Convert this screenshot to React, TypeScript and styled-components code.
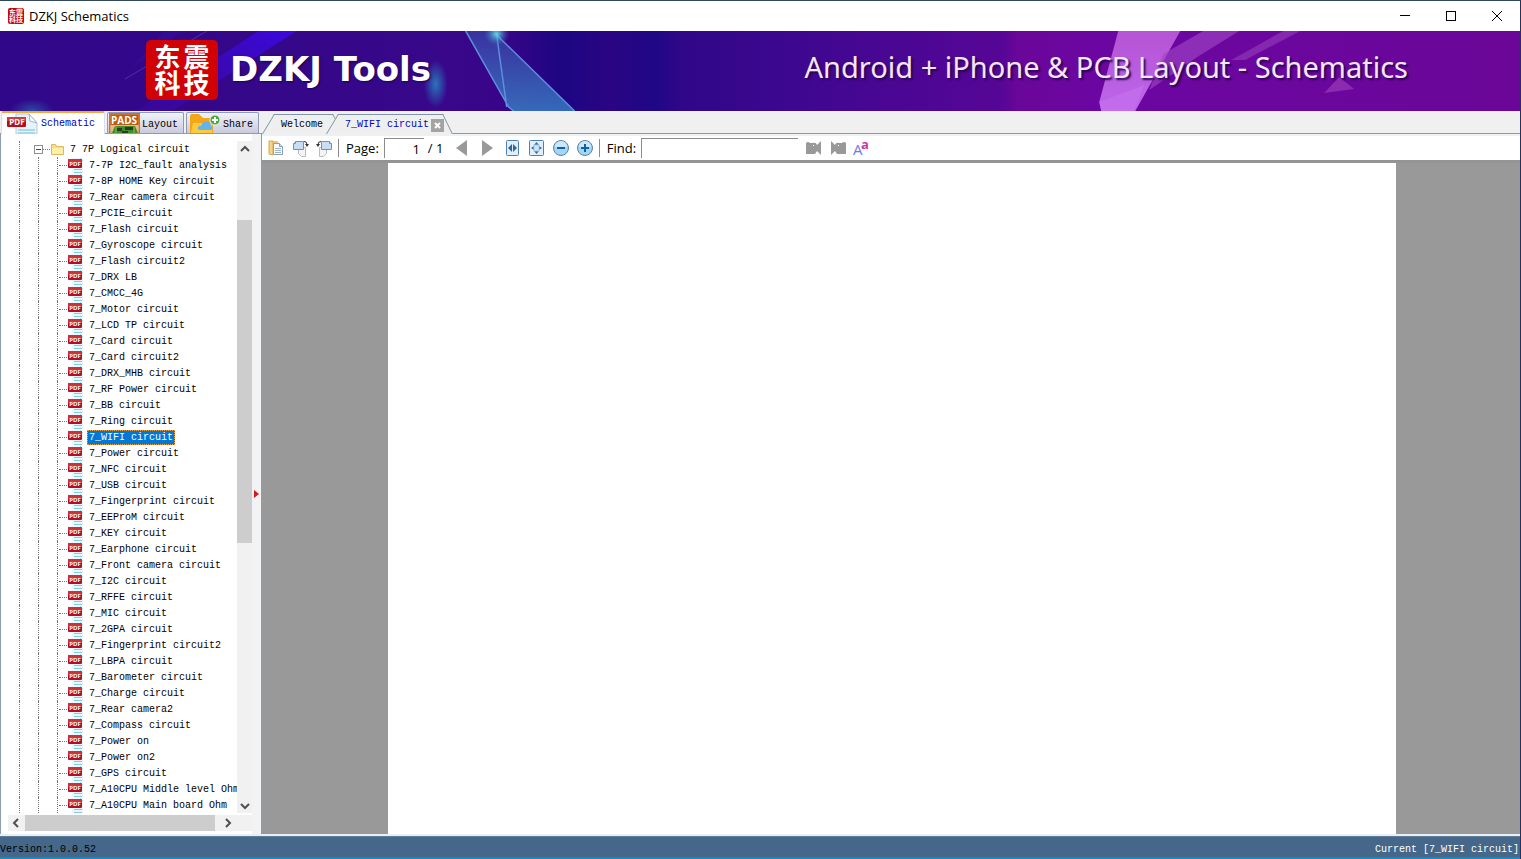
import React from "react";
import styled, { createGlobalStyle, css } from "styled-components";

const mono = `"Liberation Mono", monospace`;
const ui = `"Open Sans", "Noto Sans", sans-serif`;
const cjk = `"Noto Sans CJK SC", sans-serif`;

const Global = createGlobalStyle`
  *, *::before, *::after { box-sizing: border-box; }
  body { margin: 0; background: #f0f0f0; }
  button { padding: 0; border: 0; background: none; color: inherit; font: inherit; }
  svg { display: block; flex: none; }
`;

const Window = styled.div`
  display: flex;
  flex-direction: column;
  min-height: 100vh;
  border-top: 1px solid #31475c;
  border-right: 1px solid #26305e;
  background: #f0f0f0;
  color: #000;
  font: 10px/16px ${mono};
`;

const TitleBar = styled.header`
  display: flex;
  align-items: center;
  height: 30px;
  padding: 0 0 0 8px;
  background: #fff;
`;

const Title = styled.h1`
  flex: 1;
  margin: 0 0 0 5px;
  font: 13px/16px ${ui};
`;

const CaptionButton = styled.button`
  display: flex;
  align-items: center;
  justify-content: center;
  width: 46px;
  height: 30px;
`;

const Banner = styled.div`
  position: relative;
  display: flex;
  align-items: center;
  height: 80px;
  padding: 0 112px 0 146px;
  overflow: hidden;
  background: #32078a;
  color: #fff;
`;

const BannerArt = styled.svg`
  position: absolute;
  inset: 0;
  width: 100%;
  height: 100%;
`;

const Logo = styled.div<{ $small?: boolean }>`
  position: relative;
  display: grid;
  grid-template-columns: auto auto;
  place-content: center;
  background: #d00205;
  color: #fff;
  font-family: ${cjk};
  font-weight: 700;
  ${(p) =>
    p.$small
      ? css`
          width: 16px;
          height: 16px;
          border-radius: 2px;
          font-size: 7px;
          line-height: 7px;
        `
      : css`
          column-gap: 3px;
          width: 72px;
          height: 60px;
          margin-bottom: 2px;
          padding-bottom: 2px;
          border-radius: 5px;
          font-size: 26px;
          line-height: 26px;
        `}
`;

const Brand = styled.strong`
  position: relative;
  flex: 1;
  margin: 0 0 4px 12px;
  font: 700 34px/40px "DejaVu Sans", sans-serif;
  text-shadow: 1px 1px 2px #1a0550;
`;

const Slogan = styled.span`
  position: relative;
  margin-bottom: 8px;
  font: 29px/40px "Noto Sans", sans-serif;
  color: #f4e6fb;
  text-shadow: 2px 2px 2px #2b0550;
  white-space: nowrap;
`;

const Tabs = styled.div`
  display: flex;
  align-items: flex-end;
  height: 23px;
`;

const SideTabs = styled.nav`
  display: flex;
  align-items: flex-end;
  gap: 2px;
  width: 262px;
  height: 23px;
  padding-left: 1px;
  border-bottom: 1px solid #8b9cb3;
`;

const SideTab = styled.button<{ $active?: boolean }>`
  display: flex;
  align-items: center;
  gap: 2px;
  height: 21px;
  padding: 0 5px 0 1px;
  overflow: hidden;
  border: 1px solid #8b9cb3;
  border-bottom: 0;
  border-radius: 2px 2px 0 0;
  background: linear-gradient(#f1f2f7, #c9cbde);
  > span {
    padding-top: 3px;
  }
  ${(p) =>
    p.$active &&
    css`
      gap: 2px;
      height: 23px;
      margin-bottom: -1px;
      padding: 0 9px 0 4px;
      border-color: #d9dfe8;
      border-top: 2px solid #f2a83c;
      background: #fff;
      color: #0000c8;
      > span {
        padding-top: 0;
      }
    `}
`;

const DocTabs = styled.div`
  display: flex;
  flex: 1;
  align-items: flex-end;
  height: 23px;
  padding-left: 6px;
  border-bottom: 1px solid #8d9ba8;
`;

const DocTab = styled.div<{ $active?: boolean }>`
  position: relative;
  display: flex;
  align-items: center;
  gap: 2px;
  height: 20px;
  margin-bottom: -1px;
  padding: 2px 16px 0 13px;
  ${(p) =>
    p.$active &&
    css`
      margin-left: -7px;
      padding-right: 4px;
      color: #0000c8;
    `}

  &::before,
  &::after {
    content: "";
    position: absolute;
    top: 0;
    bottom: 0;
    border-top: 1px solid #7f95a8;
    background: #efefef;
  }
  &::before {
    left: 0;
    right: 40%;
    border-left: 1px solid #7f95a8;
    transform: skewX(-31deg);
  }
  &::after {
    left: 40%;
    right: 0;
    border-right: 1px solid #7f95a8;
    transform: skewX(${(p) => (p.$active ? 26 : 31)}deg);
  }
  > * {
    position: relative;
    z-index: 1;
  }
`;

const CloseTab = styled.button`
  display: flex;
  align-items: center;
  justify-content: center;
  width: 13px;
  height: 13px;
  background: #a3a3a3;
`;

const Body = styled.main`
  display: flex;
  flex: 1;
  border-bottom: 2px solid #e9eef3;
`;

const Sidebar = styled.aside`
  display: flex;
  flex-direction: column;
  width: 252px;
  padding: 7px 0 3px 7px;
  border-left: 1px solid #8b9cb3;
  background: #fff;
`;

const TreePane = styled.div`
  display: flex;
  flex: 1;
`;

const Tree = styled.ul`
  flex: 1;
  width: 0;
  margin: 0;
  padding: 0 0 0 11px;
  overflow: hidden;
  list-style: none;
`;

const Item = styled.li`
  display: flex;
  align-items: center;
  height: 16px;
  white-space: nowrap;
`;

const Guide = styled.span<{ $branch?: boolean }>`
  position: relative;
  flex: none;
  width: ${(p) => (p.$branch ? 10 : 19)}px;
  height: 16px;
  border-left: 1px dotted #777;
  ${(p) =>
    p.$branch &&
    css`
      &::after {
        content: "";
        position: absolute;
        top: 8px;
        left: 1px;
        right: 0;
        border-top: 1px dotted #777;
      }
    `}
`;

const Dash = styled.span`
  width: 7px;
  border-top: 1px dotted #777;
`;

const Expander = styled.button`
  display: flex;
  align-items: center;
  justify-content: center;
  width: 9px;
  height: 9px;
  margin-left: -4px;
  border: 1px solid #8f8f9c;
  background: #fff;
  &::after {
    content: "";
    width: 5px;
    height: 1px;
    background: #33458c;
  }
`;

const Label = styled.button<{ $selected?: boolean }>`
  height: 15px;
  margin-left: 3px;
  padding: 0 2px;
  line-height: 15px;
  white-space: nowrap;
  ${(p) =>
    p.$selected &&
    css`
      padding: 0 1px;
      border: 1px dotted #e8a34c;
      background: #0078d7;
      color: #fff;
      line-height: 13px;
    `}
`;

const VScroll = styled.div`
  display: flex;
  flex-direction: column;
  width: 15px;
  background: #f1f1f1;
`;

const HScroll = styled.div`
  display: flex;
  height: 16px;
  margin-top: 2px;
  background: #f1f1f1;
`;

const ScrollButton = styled.button<{ $vertical?: boolean }>`
  display: flex;
  flex: none;
  align-items: center;
  justify-content: center;
  width: ${(p) => (p.$vertical ? 15 : 17)}px;
  height: 16px;
`;

const Space = styled.div<{ $grow: number }>`
  flex: ${(p) => p.$grow} 1 0;
`;

const Thumb = styled(Space)`
  background: #cdcdcd;
`;

const Corner = styled.div`
  width: 16px;
`;

const Splitter = styled.div`
  display: flex;
  align-items: center;
  justify-content: center;
  width: 10px;
  padding-top: 20px;
  border-right: 1px solid #8b9cb3;
  background: #f2f3f5;
`;

const Viewer = styled.section`
  display: flex;
  flex: 1;
  flex-direction: column;
`;

const Toolbar = styled.div`
  display: flex;
  align-items: center;
  height: 29px;
  padding: 0 2px;
  border-top: 2px solid #edf1f3;
  border-bottom: 3px solid #949494;
  background: #fff;
  font: 13px/18px ${ui};
`;

const ToolButton = styled.button<{ $wide?: boolean }>`
  display: flex;
  align-items: center;
  justify-content: center;
  width: ${(p) => (p.$wide ? 26 : 24)}px;
  height: 22px;
`;

const Separator = styled.span`
  width: 1px;
  height: 18px;
  margin: 0 7px 0 2px;
  background: #8c8c8c;
`;

const Field = styled.input<{ $width: number }>`
  width: ${(p) => p.$width}px;
  height: 20px;
  margin: 0 4px 0 5px;
  padding: 0 4px;
  border: 0;
  border-top: 1px solid #8c8c8c;
  border-left: 1px solid #8c8c8c;
  border-radius: 0;
  background: #fff;
  font: 13px/18px ${ui};
  text-align: ${(p) => (p.$width < 100 ? "right" : "left")};
`;

const PageTotal = styled.span`
  width: 21px;
  white-space: nowrap;
`;

const Canvas = styled.div`
  flex: 1;
  display: flex;
  padding: 0 124px 0 126px;
  background: #999;
`;

const Page = styled.div`
  flex: 1;
  background: #fff;
`;

const Status = styled.footer`
  display: flex;
  align-items: flex-end;
  justify-content: space-between;
  height: 23px;
  padding-right: 1px;
  border-top: 1px solid #5c7c98;
  border-bottom: 2px solid #1489c4;
  background: #44678a;
  line-height: 14px;
  > span:last-child {
    color: #fff;
  }
`;

const docs = [
  "7-7P I2C_fault analysis", "7-8P HOME Key circuit", "7_Rear camera circuit", "7_PCIE_circuit",
  "7_Flash circuit", "7_Gyroscope circuit", "7_Flash circuit2", "7_DRX LB", "7_CMCC_4G",
  "7_Motor circuit", "7_LCD TP circuit", "7_Card circuit", "7_Card circuit2", "7_DRX_MHB circuit",
  "7_RF Power circuit", "7_BB circuit", "7_Ring circuit", "7_WIFI circuit", "7_Power circuit",
  "7_NFC circuit", "7_USB circuit", "7_Fingerprint circuit", "7_EEProM circuit", "7_KEY circuit",
  "7_Earphone circuit", "7_Front camera circuit", "7_I2C circuit", "7_RFFE circuit", "7_MIC circuit",
  "7_2GPA circuit", "7_Fingerprint circuit2", "7_LBPA circuit", "7_Barometer circuit",
  "7_Charge circuit", "7_Rear camera2", "7_Compass circuit", "7_Power on", "7_Power on2",
  "7_GPS circuit", "7_A10CPU Middle level Ohm", "7_A10CPU Main board Ohm",
];

const PdfIcon = () => (
  <svg width="17" height="16" viewBox="0 0 17 16">
    <path d="M5 1h9l2 2v13H5z" fill="#e9f6fc" />
    <path d="M7 12.500h8M7 15.500h8" stroke="#86cbe6" />
    <path d="M13 1l3 3" stroke="#a9cfe0" />
    <rect x="1" y="2" width="14" height="9" rx="1" fill="#b01024" />
    <rect x="1" y="2" width="14" height="4" fill="#cf3040" />
    <text x="8" y="9" textAnchor="middle" fontFamily="Open Sans, sans-serif" fontWeight="700" fontSize="6" fill="#fff">PDF</text>
  </svg>
);

const PdfTabIcon = () => (
  <svg width="33" height="21" viewBox="0 0 33 21">
    <path d="M10 1h13l8 9v11H10z" fill="#e6f3fa" stroke="#b4c9d6" />
    <path d="M23 1l1 7 7 2z" fill="#fff" stroke="#9fb7c6" />
    <path d="M12 17h17M12 20h17" stroke="#a9d8ee" strokeWidth="2" />
    <rect x="1" y="4" width="19" height="10" rx="1" fill="#b80f17" />
    <rect x="1" y="4" width="19" height="4" fill="#d23a3c" />
    <text x="11" y="12" textAnchor="middle" fontFamily="Open Sans, sans-serif" fontWeight="700" fontSize="8" fill="#fff">PDF</text>
  </svg>
);

const PadsIcon = () => (
  <svg width="31" height="20" viewBox="0 0 31 20">
    <rect width="31" height="20" fill="#bd5a13" />
    <path d="M1 12h29v8H1z" fill="#e8b98b" />
    <rect x="1" y="1" width="29" height="18" fill="none" stroke="#d98b46" />
    <text x="15" y="11" textAnchor="middle" fontFamily="Open Sans, sans-serif" fontWeight="700" fontSize="10" fill="#fff">PADS</text>
    <path d="M3 20l3-7h20l3 7z" fill="#438c2c" />
    <path d="M8 15h5v3H8zM16 14h8v3h-8zM13 18h6v2h-6z" fill="#263c24" />
    <path d="M7 13v7M25 14v6" stroke="#88bd42" />
  </svg>
);

const ShareIcon = () => (
  <svg width="33" height="20" viewBox="0 0 33 20">
    <path d="M2 3q0-2 2-2h7l4 4h8q2 0 2 2v13H2z" fill="#f3a51c" />
    <path d="M5 10h19v10H3z" fill="#ffc93a" />
    <path d="M11 17q-2-1-1-3t3-1q2-6 7-4 3 1 3 4 3 2 0 4z" fill="#62b4ef" />
    <circle cx="27" cy="7" r="5" fill="#48a943" stroke="#e4f1d7" />
    <path d="M27 4v6M24 7h6" stroke="#fff" strokeWidth="2" />
  </svg>
);

const FolderIcon = () => (
  <svg width="15" height="14" viewBox="0 0 15 14">
    <path d="M1.500 2.500h4l1 2h7v8h-12z" fill="#f7df81" stroke="#dcb95a" />
    <path d="M2 6h11v6H2z" fill="#ffeeaa" />
  </svg>
);

const Chevron = ({ d }: { d: string }) => (
  <svg width="10" height="10" viewBox="0 0 10 10">
    <path d={d} fill="none" stroke="#505050" strokeWidth="2" />
  </svg>
);

const CopyIcon = () => (
  <svg width="16" height="16" viewBox="0 0 16 16">
    <path d="M1 1h9v2H6v11H1z" fill="#efc56f" />
    <path d="M1 1h4v14l-4-1z" fill="#f5d58d" stroke="#d6a84c" />
    <path d="M5.500 3.500h6l3 3v8h-9z" fill="#f9fafc" stroke="#8c9fb3" />
    <path d="M11.500 3.500v3h3" fill="#dce2e9" stroke="#8c9fb3" />
    <path d="M7 8.500h6M7 10.500h6M7 12.500h6" stroke="#9bb4cc" />
  </svg>
);

const RotateIcon = ({ left }: { left?: boolean }) => (
  <svg width="17" height="17" viewBox="0 0 17 17">
    <g transform={left ? "translate(17 0) scale(-1 1)" : undefined}>
      <path d="M6.500 7.500h7v9h-4l-3-3z" fill="#f4f4f4" stroke="#b7bcc2" />
      <path d="M1.500 3.500l2-2h8v8h-10z" fill="#c9def5" stroke="#6e91bb" />
      <path d="M3.500 1.500v2h-2" fill="#fff" stroke="#6e91bb" />
      <path d="M12 1.500q3 0 3 3" fill="none" stroke="#333" />
      <path d="M13 4h4l-2 3z" fill="#333" />
    </g>
  </svg>
);

const FitIcon = ({ page }: { page?: boolean }) => (
  <svg width={page ? 15 : 13} height="16" viewBox={page ? "0 0 15 16" : "0 0 13 16"}>
    <rect x=".5" y=".5" width={page ? 14 : 12} height="15" rx="1" fill="#e0effb" stroke="#4f7fae" />
    {page ? (
      <>
        <path d="M7.500 2L5 5h5zM7.500 14L5 11h5zM2 8l3-2v4zM13 8l-3-2v4z" fill="#356b9f" />
        <rect x="5" y="5" width="5" height="6" fill="#cfe5f8" stroke="#a8c6df" />
      </>
    ) : (
      <path d="M2 8l4-4v8zM11 8L7 4v8z" fill="#28679f" />
    )}
  </svg>
);

const ZoomIcon = ({ plus }: { plus?: boolean }) => (
  <svg width="18" height="18" viewBox="0 0 18 18">
    <circle cx="9" cy="9" r="7.500" fill="#a0d6fa" stroke="#62809a" />
    <path d="M3 8a6 6 0 0 1 12 0z" fill="#c6e9fd" />
    <path d={plus ? "M5 9h8M9 5v8" : "M5 9h8"} stroke="#175f9b" strokeWidth="2" />
  </svg>
);

const FindIcon = ({ next }: { next?: boolean }) => (
  <svg width="16" height="16" viewBox="0 0 16 16">
    <g transform={next ? "translate(16 0) scale(-1 1)" : undefined}>
      <path d="M0 3q2-2 4 0h3q3-1 4 2l4-4v14l-4-4-2 3H0z" fill="#999" />
      <path d="M7 5h1v1H7z" fill="#fff" />
    </g>
  </svg>
);

const MatchCaseIcon = () => (
  <svg width="18" height="22" viewBox="0 0 18 22">
    <text x="0" y="18" fontFamily="Open Sans, sans-serif" fontSize="15" fill="#7b75e8">A</text>
    <text x="8" y="12" fontFamily="Open Sans, sans-serif" fontWeight="700" fontSize="13" fill="#c43c9f">a</text>
  </svg>
);

const BannerBackground = () => (
  <BannerArt viewBox="0 0 1521 80" preserveAspectRatio="none" aria-hidden="true">
    <defs>
      <linearGradient id="base">
        <stop offset="0" stopColor="#310789" />
        <stop offset=".29" stopColor="#38078a" />
        <stop offset=".33" stopColor="#380588" />
        <stop offset=".37" stopColor="#1d0582" />
        <stop offset=".4" stopColor="#2a0582" />
        <stop offset=".43" stopColor="#1f0786" />
        <stop offset=".45" stopColor="#300788" />
        <stop offset=".55" stopColor="#430792" />
        <stop offset=".66" stopColor="#570696" />
        <stop offset=".67" stopColor="#6b069a" />
        <stop offset=".72" stopColor="#6c06a2" />
        <stop offset="1" stopColor="#6b0699" />
      </linearGradient>
      <linearGradient id="beam" x1="0" y1="1" x2="1" y2="0">
        <stop offset="0" stopColor="#3d09aa" stopOpacity=".4" />
        <stop offset="1" stopColor="#3b08df" />
      </linearGradient>
      <linearGradient id="glass" x2="0" y2="1">
        <stop offset="0" stopColor="#383ca5" />
        <stop offset="1" stopColor="#3a82c6" />
      </linearGradient>
      <linearGradient id="pink" x2="0" y2="1">
        <stop offset="0" stopColor="#b554d4" />
        <stop offset="1" stopColor="#bd66eb" />
      </linearGradient>
      <radialGradient id="spark">
        <stop offset="0" stopColor="#63dce5" />
        <stop offset="1" stopColor="#3767b8" stopOpacity="0" />
      </radialGradient>
      <radialGradient id="blue">
        <stop offset="0" stopColor="#2875ba" />
        <stop offset="1" stopColor="#2875ba" stopOpacity="0" />
      </radialGradient>
    </defs>
    <rect width="1521" height="80" fill="url(#base)" />
    <path d="M259 0h38L245 33 173 80h-37z" fill="url(#beam)" />
    <path d="M165 0h17l-50 37-8 8z" fill="#3510a0" opacity=".5" />
    <path d="M207 0L125 48" stroke="#594fba" opacity=".6" />
    <ellipse cx="32" cy="80" rx="22" ry="12" fill="url(#blue)" opacity=".6" />
    <ellipse cx="436" cy="53" rx="12" ry="24" fill="url(#blue)" />
    <path d="M465 0h31l12 75z" fill="url(#glass)" opacity=".8" />
    <path d="M497 4l78 76h-62l-6-5z" fill="url(#glass)" opacity=".8" />
    <path d="M466 0l43 76 5 4M497 4l10 72M497 4l78 76" fill="none" stroke="#608ddd" strokeWidth="1.5" />
    <ellipse cx="497" cy="3" rx="13" ry="12" fill="url(#spark)" />
    <path d="M1119 0h62l-45 80h-34l-2-9z" fill="url(#pink)" />
    <path d="M1100 71l45-17-10 26h-33z" fill="#c772ef" opacity=".6" />
    <path d="M1204 0h36l-42 26-48 33 14-36z" fill="#a044c4" opacity=".65" />
    <path d="M1284 0h17l-55 29h-14z" fill="#9440bb" opacity=".6" />
    <path d="M1340 46l15 12-30 4z" fill="#8a2bb0" />
  </BannerArt>
);

const LogoMark = ({ small }: { small?: boolean }) => (
  <Logo $small={small} aria-hidden={small}>
    <span>东</span>
    <span>震</span>
    <span>科</span>
    <span>技</span>
  </Logo>
);

export default function App() {
  return (
    <Window>
      <Global />
      <TitleBar>
        <LogoMark small />
        <Title>DZKJ Schematics</Title>
        <CaptionButton aria-label="Minimize">
          <svg width="10" height="10"><path d="M0 4.500h10" stroke="#000" /></svg>
        </CaptionButton>
        <CaptionButton aria-label="Maximize">
          <svg width="10" height="10"><rect x=".5" y=".5" width="9" height="9" fill="none" stroke="#000" /></svg>
        </CaptionButton>
        <CaptionButton aria-label="Close">
          <svg width="10" height="10"><path d="M0 0l10 10M10 0L0 10" stroke="#000" /></svg>
        </CaptionButton>
      </TitleBar>

      <Banner>
        <BannerBackground />
        <LogoMark />
        <Brand>DZKJ Tools</Brand>
        <Slogan>Android + iPhone &amp; PCB Layout - Schematics</Slogan>
      </Banner>

      <Tabs>
        <SideTabs>
          <SideTab $active><PdfTabIcon /><span>Schematic</span></SideTab>
          <SideTab><PadsIcon /><span>Layout</span></SideTab>
          <SideTab><ShareIcon /><span>Share</span></SideTab>
        </SideTabs>
        <DocTabs>
          <DocTab><button>Welcome</button></DocTab>
          <DocTab $active>
            <button>7_WIFI circuit</button>
            <CloseTab aria-label="Close tab">
              <svg width="7" height="7"><path d="M1 1l5 5M6 1L1 6" stroke="#fff" strokeWidth="2" /></svg>
            </CloseTab>
          </DocTab>
        </DocTabs>
      </Tabs>

      <Body>
        <Sidebar>
          <TreePane>
            <Tree>
              <Item>
                <Guide />
                <Expander aria-label="Collapse" />
                <Dash />
                <FolderIcon />
                <Label>7 7P Logical circuit</Label>
              </Item>
              {docs.map((name) => (
                <Item key={name}>
                  <Guide />
                  <Guide />
                  <Guide $branch />
                  <PdfIcon />
                  <Label $selected={name === "7_WIFI circuit"}>{name}</Label>
                </Item>
              ))}
            </Tree>
            <VScroll>
              <ScrollButton $vertical aria-label="Scroll up"><Chevron d="M1 7l4-4 4 4" /></ScrollButton>
              <Space $grow={63} />
              <Thumb $grow={324} />
              <Space $grow={255} />
              <ScrollButton $vertical aria-label="Scroll down"><Chevron d="M1 4l4 4 4-4" /></ScrollButton>
            </VScroll>
          </TreePane>
          <HScroll>
            <ScrollButton aria-label="Scroll left"><Chevron d="M6 1L2 5l4 4" /></ScrollButton>
            <Thumb $grow={190} />
            <Space $grow={4} />
            <ScrollButton aria-label="Scroll right"><Chevron d="M3 1l4 4-4 4" /></ScrollButton>
            <Corner />
          </HScroll>
        </Sidebar>
        <Splitter>
          <svg width="5" height="8"><path d="M0 0l5 4-5 4z" fill="#d01c1c" /></svg>
        </Splitter>

        <Viewer>
          <Toolbar>
            <ToolButton aria-label="Copy"><CopyIcon /></ToolButton>
            <ToolButton aria-label="Rotate right"><RotateIcon /></ToolButton>
            <ToolButton aria-label="Rotate left"><RotateIcon left /></ToolButton>
            <Separator />
            <label htmlFor="page">Page:</label>
            <Field id="page" $width={40} defaultValue="1" />
            <PageTotal>/ 1</PageTotal>
            <ToolButton $wide aria-label="Previous page">
              <svg width="11" height="16"><path d="M11 0v16L0 8z" fill="#999" /></svg>
            </ToolButton>
            <ToolButton $wide aria-label="Next page">
              <svg width="11" height="16"><path d="M0 0v16l11-8z" fill="#999" /></svg>
            </ToolButton>
            <ToolButton aria-label="Fit width"><FitIcon /></ToolButton>
            <ToolButton aria-label="Fit page"><FitIcon page /></ToolButton>
            <ToolButton aria-label="Zoom out"><ZoomIcon /></ToolButton>
            <ToolButton aria-label="Zoom in"><ZoomIcon plus /></ToolButton>
            <Separator />
            <label htmlFor="find">Find:</label>
            <Field id="find" $width={157} />
            <ToolButton aria-label="Find previous"><FindIcon /></ToolButton>
            <ToolButton aria-label="Find next"><FindIcon next /></ToolButton>
            <ToolButton aria-label="Match case"><MatchCaseIcon /></ToolButton>
          </Toolbar>
          <Canvas>
            <Page />
          </Canvas>
        </Viewer>
      </Body>

      <Status>
        <span>Version:1.0.0.52</span>
        <span>Current [7_WIFI circuit]</span>
      </Status>
    </Window>
  );
}
